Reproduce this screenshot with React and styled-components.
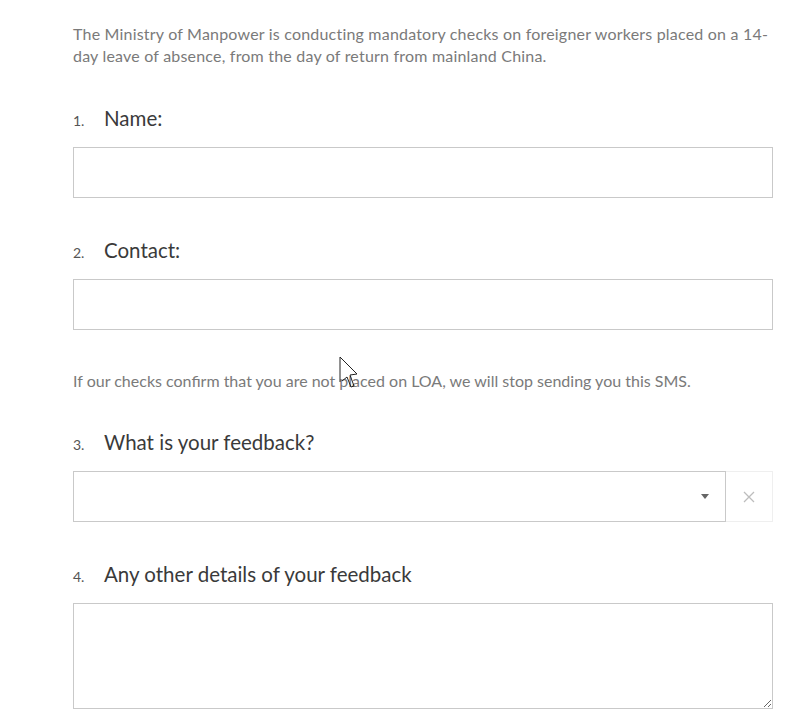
import React from "react";
import styled, { createGlobalStyle } from "styled-components";

const GlobalStyle = createGlobalStyle`
  html, body {
    margin: 0;
    padding: 0;
    background: #ffffff;
  }
  body {
    font-family: Lato, "Noto Sans", sans-serif;
  }
`;

const questions = [
  { num: "1.", label: "Name:", gap: 37 },
  { num: "2.", label: "Contact:", gap: 38 },
];

const App = () => {
  return (
    <Page>
      <GlobalStyle />
      <Intro>
        The Ministry of Manpower is conducting mandatory checks on foreigner
        workers placed on a 14-day leave of absence, from the day of return
        from mainland China.
      </Intro>

      {questions.map((q) => (
        <Question key={q.num} $gap={q.gap}>
          <Label>
            <Num>{q.num}</Num>
            <span>{q.label}</span>
          </Label>
          <TextInput type="text" />
        </Question>
      ))}

      <Note>
        If our checks confirm that you are not placed on LOA, we will stop
        sending you this SMS.
        <Cursor width="20" height="36" viewBox="0 0 20 36">
          <path
            d="M1 1 L1 26 M1 1 L18 18 L11 19 L15 30 L12 31 L8 21 L3 25"
            fill="none"
            stroke="#222"
            strokeWidth="1"
          />
        </Cursor>
      </Note>

      <Question $gap={36}>
        <Label>
          <Num>3.</Num>
          <span>What is your feedback?</span>
        </Label>
        <SelectRow>
          <SelectBox>
            <Caret />
          </SelectBox>
          <ClearButton>
            <svg width="12" height="12" viewBox="0 0 12 12">
              <path d="M1 1 L11 11 M11 1 L1 11" stroke="#bdbdbd" strokeWidth="1.3" />
            </svg>
          </ClearButton>
        </SelectRow>
      </Question>

      <Question $gap={38}>
        <Label>
          <Num>4.</Num>
          <span>Any other details of your feedback</span>
        </Label>
        <TextArea />
      </Question>
    </Page>
  );
};

const Page = styled.div`
  width: 700px;
  padding: 23px 27px 0 73px;
  box-sizing: content-box;
  height: 700px;
  overflow: hidden;
`;

const Intro = styled.p`
  margin: 0;
  font-size: 16px;
  line-height: 22px;
  letter-spacing: 0.2px;
  color: #7a7a7a;
`;

const Question = styled.div`
  margin-top: ${(p) => p.$gap}px;
  display: flex;
  flex-direction: column;
  gap: 15px;
`;

const Label = styled.div`
  display: flex;
  align-items: baseline;
  height: 28px;
  line-height: 28px;
  font-size: 20.5px;
  color: #3a3a3a;
`;

const Num = styled.span`
  width: 31px;
  font-size: 14px;
  color: #555;
`;

const TextInput = styled.input`
  box-sizing: border-box;
  width: 700px;
  height: 51px;
  margin: 0;
  border: 1px solid #c9c9c9;
  background: #fff;
  outline: none;
`;

const Note = styled.p`
  position: relative;
  margin: 40px 0 0;
  font-size: 16px;
  line-height: 22px;
  color: #7a7a7a;
`;

const Cursor = styled.svg`
  position: absolute;
  left: 266px;
  top: -14px;
`;

const SelectRow = styled.div`
  display: flex;
  height: 51px;
`;

const SelectBox = styled.div`
  box-sizing: border-box;
  flex: 0 0 653px;
  border: 1px solid #c9c9c9;
  display: flex;
  align-items: center;
  justify-content: flex-end;
  padding-right: 16px;
`;

const Caret = styled.span`
  width: 0;
  height: 0;
  border-left: 4px solid transparent;
  border-right: 4px solid transparent;
  border-top: 5px solid #666;
`;

const ClearButton = styled.div`
  box-sizing: border-box;
  flex: 0 0 47px;
  border: 1px solid #efefef;
  border-left: none;
  display: flex;
  align-items: center;
  justify-content: center;
`;

const TextArea = styled.textarea`
  box-sizing: border-box;
  width: 700px;
  height: 106px;
  margin: 0;
  border: 1px solid #c9c9c9;
  resize: vertical;
  outline: none;
`;

export default App;
